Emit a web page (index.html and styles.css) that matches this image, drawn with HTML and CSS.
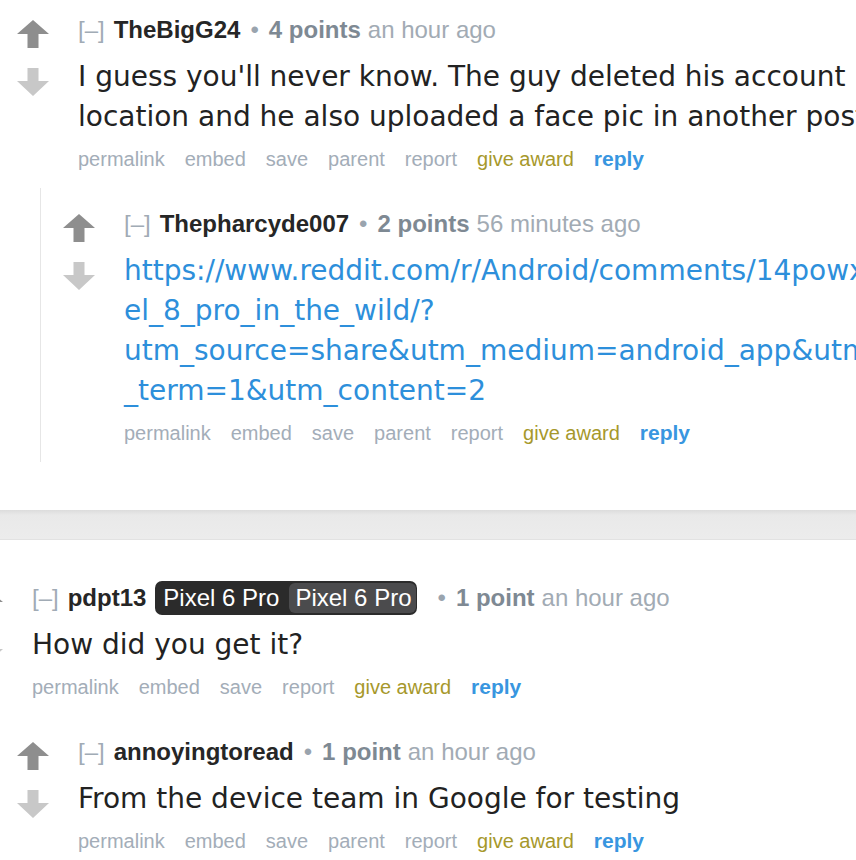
FILE: index.html
```html
<!DOCTYPE html>
<html lang="en">
<head>
<meta charset="utf-8">
<title>Comments</title>
<link rel="stylesheet" href="styles.css">
</head>
<body>
<div class="page">
  <div class="thread thread-first">
    <div class="comment">
      <div class="midcol">
        <svg class="arrow up" width="32" height="28" viewBox="0 0 32 28"><path d="M16 0 L32 14 L21.5 14 L21.5 28 L10.5 28 L10.5 14 L0 14 Z"/></svg>
        <svg class="arrow down" width="32" height="28" viewBox="0 0 32 28"><path d="M10.5 0 H21.5 V13 H32 L16 28 L0 13 H10.5 Z"/></svg>
      </div>
      <div class="entry">
        <div class="tagline">
          <span class="expand">[–]</span>
          <span class="author">TheBigG24</span>
          <span class="dot">•</span>
          <span class="score">4 points</span>
          <span class="time">an hour ago</span>
        </div>
        <div class="md">
          <span class="line">I guess you'll never know. The guy deleted his account</span>
          <span class="line">location and he also uploaded a face pic in another post</span>
        </div>
        <ul class="buttons">
          <li>permalink</li><li>embed</li><li>save</li><li>parent</li><li>report</li><li class="award">give award</li><li class="reply">reply</li>
        </ul>
      </div>
    </div>
    <div class="child">
      <div class="comment">
        <div class="midcol">
          <svg class="arrow up" width="32" height="28" viewBox="0 0 32 28"><path d="M16 0 L32 14 L21.5 14 L21.5 28 L10.5 28 L10.5 14 L0 14 Z"/></svg>
          <svg class="arrow down" width="32" height="28" viewBox="0 0 32 28"><path d="M10.5 0 H21.5 V13 H32 L16 28 L0 13 H10.5 Z"/></svg>
        </div>
        <div class="entry">
          <div class="tagline">
            <span class="expand">[–]</span>
            <span class="author">Thepharcyde007</span>
            <span class="dot">•</span>
            <span class="score">2 points</span>
            <span class="time">56 minutes ago</span>
          </div>
          <div class="md link">
            <span class="line">https://www.reddit.com/r/Android/comments/14powxq/pix</span>
            <span class="line">el_8_pro_in_the_wild/?</span>
            <span class="line">utm_source=share&amp;utm_medium=android_app&amp;utm_name=androidcss&amp;utm</span>
            <span class="line">_term=1&amp;utm_content=2</span>
          </div>
          <ul class="buttons">
            <li>permalink</li><li>embed</li><li>save</li><li>parent</li><li>report</li><li class="award">give award</li><li class="reply">reply</li>
          </ul>
        </div>
      </div>
    </div>
  </div>

  <div class="separator"></div>

  <div class="thread thread-second">
    <div class="comment">
      <div class="midcol">
        <svg class="arrow up" width="32" height="28" viewBox="0 0 32 28"><path d="M16 0 L32 14 L21.5 14 L21.5 28 L10.5 28 L10.5 14 L0 14 Z"/></svg>
        <svg class="arrow down" width="32" height="28" viewBox="0 0 32 28"><path d="M10.5 0 H21.5 V13 H32 L16 28 L0 13 H10.5 Z"/></svg>
      </div>
      <div class="entry">
        <div class="tagline">
          <span class="expand">[–]</span>
          <span class="author">pdpt13</span>
          <span class="flair">Pixel 6 Pro<span class="flair-inner">Pixel 6 Pro</span></span>
          <span class="dot">•</span>
          <span class="score">1 point</span>
          <span class="time">an hour ago</span>
        </div>
        <div class="md">
          <span class="line">How did you get it?</span>
        </div>
        <ul class="buttons">
          <li>permalink</li><li>embed</li><li>save</li><li>report</li><li class="award">give award</li><li class="reply">reply</li>
        </ul>
      </div>
    </div>
    <div class="child">
      <div class="comment">
        <div class="midcol">
          <svg class="arrow up" width="32" height="28" viewBox="0 0 32 28"><path d="M16 0 L32 14 L21.5 14 L21.5 28 L10.5 28 L10.5 14 L0 14 Z"/></svg>
          <svg class="arrow down" width="32" height="28" viewBox="0 0 32 28"><path d="M10.5 0 H21.5 V13 H32 L16 28 L0 13 H10.5 Z"/></svg>
        </div>
        <div class="entry">
          <div class="tagline">
            <span class="expand">[–]</span>
            <span class="author">annoyingtoread</span>
            <span class="dot">•</span>
            <span class="score">1 point</span>
            <span class="time">an hour ago</span>
          </div>
          <div class="md">
            <span class="line">From the device team in Google for testing</span>
          </div>
          <ul class="buttons">
            <li>permalink</li><li>embed</li><li>save</li><li>parent</li><li>report</li><li class="award">give award</li><li class="reply">reply</li>
          </ul>
        </div>
      </div>
    </div>
  </div>
</div>
</body>
</html>
```

FILE: styles.css
```css
html, body {
  margin: 0;
  padding: 0;
  background: #ffffff;
}

body {
  overflow: hidden;
  font-family: "Liberation Sans", Arial, sans-serif;
  color: #222222;
}

.page {
  width: 856px;
}

.thread-first {
  margin-left: 17px;
  padding-top: 16px;
}

.thread-second {
  margin-left: -29px;
  padding-top: 44px;
}

.comment {
  display: flex;
}

.midcol {
  flex: none;
  width: 61px;
  display: flex;
  flex-direction: column;
  padding-top: 4px;
  gap: 20px;
}

.arrow {
  display: block;
}

.arrow.up {
  fill: #8e8e8e;
}

.arrow.down {
  fill: #c8c8c8;
}

.entry {
  flex: none;
}

.tagline {
  display: flex;
  align-items: center;
  height: 28px;
  font-size: 24px;
  line-height: 28px;
  white-space: nowrap;
}

.expand {
  color: #a1abb5;
}

.author {
  margin-left: 9px;
  font-weight: bold;
  color: #262626;
}

.dot {
  margin-left: 10px;
  color: #9aa4ae;
}

.score {
  margin-left: 10px;
  font-weight: bold;
  color: #7e8993;
}

.time {
  margin-left: 7px;
  color: #a2abb4;
}

.flair {
  display: flex;
  align-items: center;
  margin-left: 9px;
  margin-right: 10px;
  height: 34px;
  padding: 0 1px 0 8px;
  border-radius: 7px;
  background: #2b2b2b;
  color: #ffffff;
  line-height: 30px;
}

.flair-inner {
  margin-left: 10px;
  height: 30px;
  padding: 0 5px 0 6px;
  border-radius: 6px;
  background: #4b4b4d;
}

.md {
  margin-top: 13px;
  font-family: "DejaVu Sans", Verdana, sans-serif;
  font-size: 28px;
  line-height: 40px;
  color: #222222;
}

.md .line {
  display: block;
  white-space: nowrap;
}

.md.link {
  color: #2d8fdb;
}

.buttons {
  display: flex;
  gap: 20px;
  margin: 8px 0 0;
  padding: 0;
  list-style: none;
  font-size: 20px;
  line-height: 28px;
  color: #a3adb8;
  white-space: nowrap;
}

.buttons .award {
  color: #a6982b;
}

.buttons .reply {
  font-weight: bold;
  font-size: 21px;
  color: #3896e0;
}

.child {
  margin-left: 23px;
  margin-top: 15px;
  padding: 22px 0 15px 22px;
  border-left: 1px solid #e6e6e6;
}

.separator {
  margin-top: 48px;
  height: 30px;
  background: linear-gradient(#dcdcdc, #e9e9e9 5px, #ececec);
  border-bottom: 1px solid #e2e2e2;
  box-sizing: border-box;
}
```
